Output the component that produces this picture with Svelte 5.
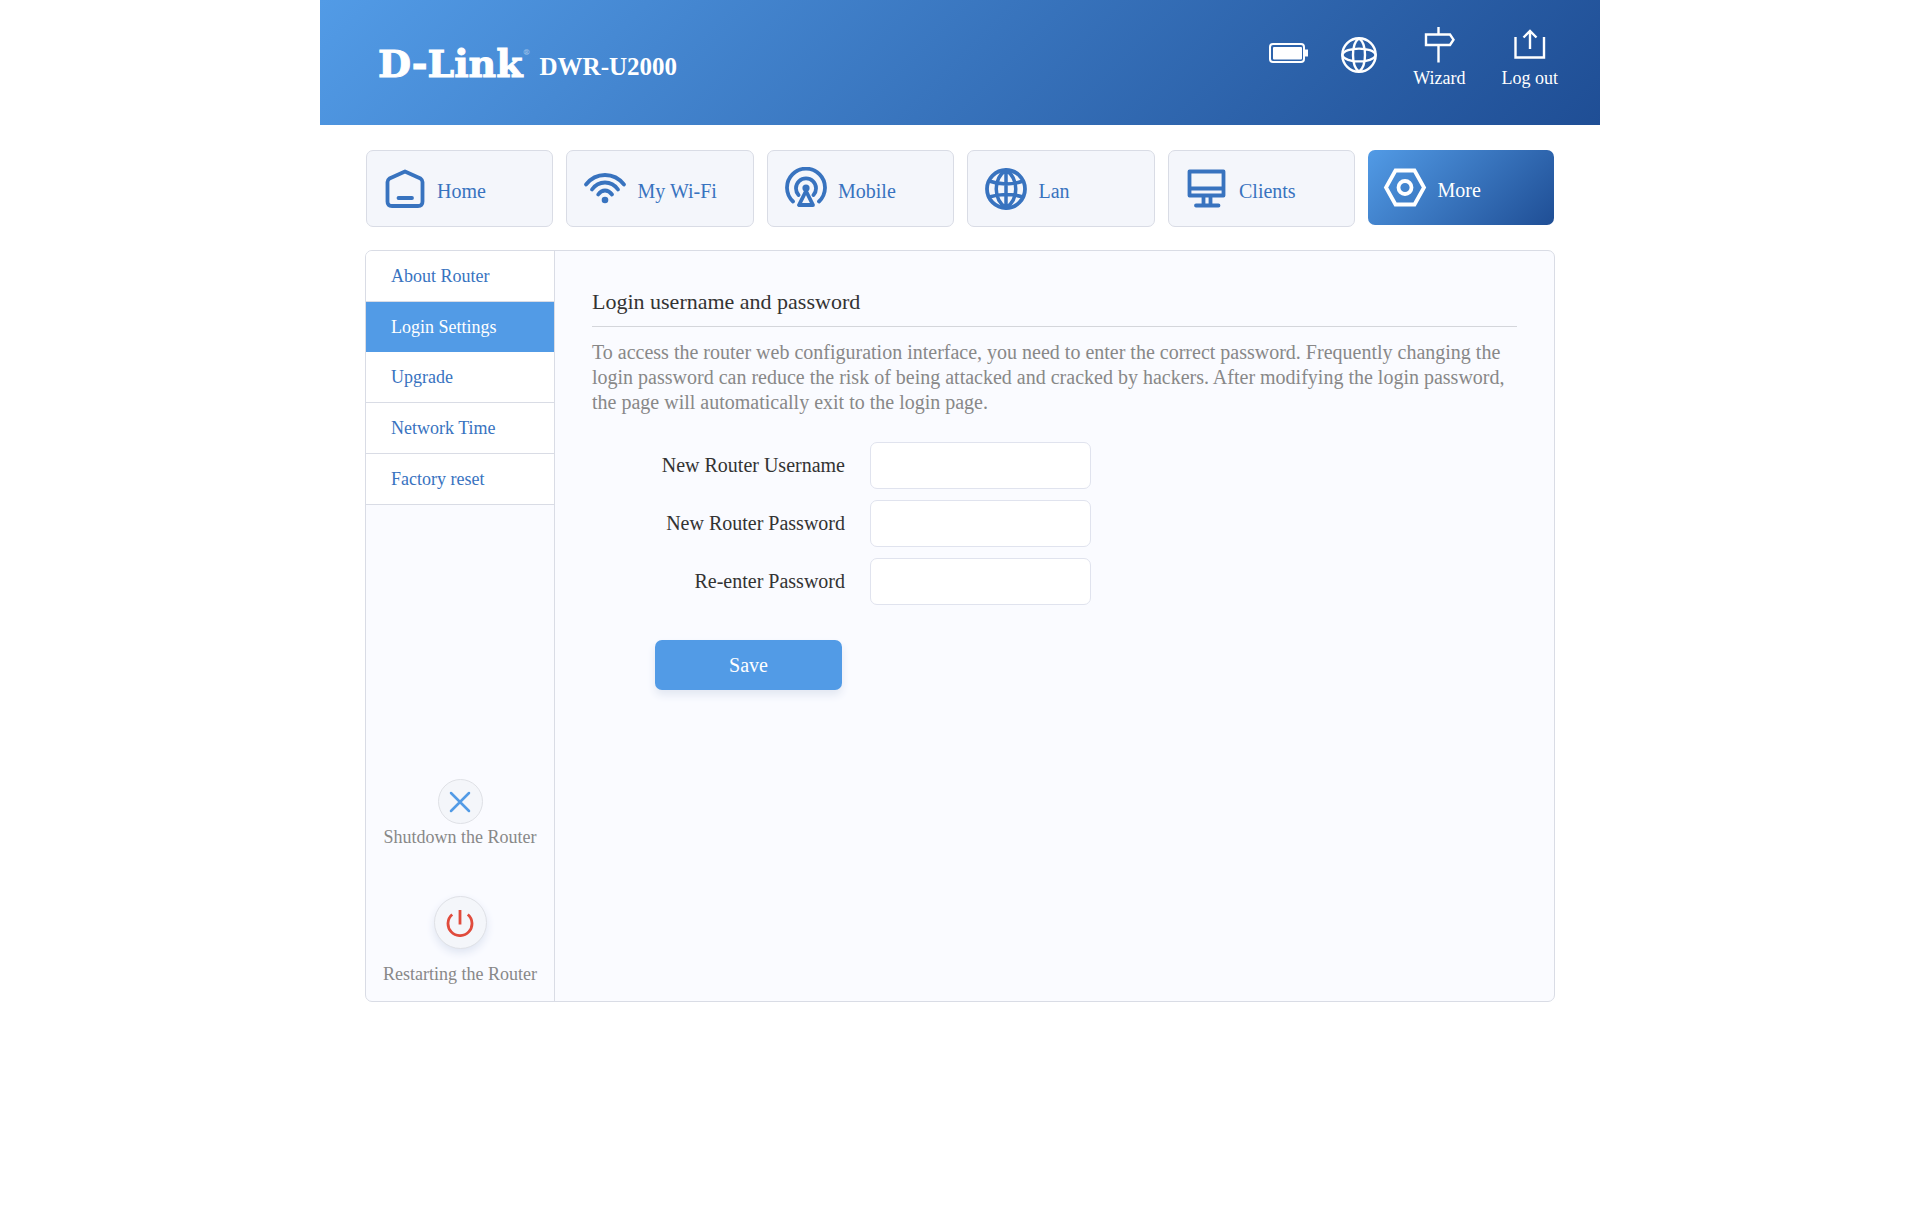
<script>
  const tabs = ['Home', 'My Wi-Fi', 'Mobile', 'Lan', 'Clients', 'More'];
  const menu = ['About Router', 'Login Settings', 'Upgrade', 'Network Time', 'Factory reset'];
  const fields = [
    { id: 'username', label: 'New Router Username', type: 'text' },
    { id: 'password', label: 'New Router Password', type: 'password' },
    { id: 'confirm', label: 'Re-enter Password', type: 'password' }
  ];
  let activeTab = $state('More');
  let activeItem = $state('Login Settings');
</script>

<div class="page">
  <header>
    <div class="brand">
      <span class="logo">D-Link<sup>®</sup></span>
      <h1>DWR-U2000</h1>
    </div>
    <div class="tools">
      <svg class="battery" width="40" height="20" viewBox="0 0 40 20" role="img" aria-label="Battery">
        <rect x="1" y="1" width="34" height="18" rx="3" fill="none" stroke="#fff" stroke-width="2" />
        <rect x="4" y="4" width="29" height="12.5" rx="1" fill="#fff" />
        <path d="M35 6.500h4v7H35z" fill="#fff" />
      </svg>
      <button class="tool globe" aria-label="Language">
        <svg width="36" height="36" viewBox="0 0 36 36" fill="none" stroke="#fff" stroke-width="2.400">
          <circle cx="18" cy="18" r="16.700" />
          <path d="M18 1.300C10 7 10 29 18 34.700M18 1.300c8 5.700 8 27.700 0 33.400M1.300 18C3.500 9.500 32.500 9.500 34.700 18M1.300 18C3.500 26.500 32.500 26.500 34.700 18" />
        </svg>
      </button>
      <button class="tool">
        <svg width="36" height="36" viewBox="0 0 36 36" fill="none" stroke="#fff" stroke-width="2.400">
          <path d="M17.500 0v7.500M17.500 18v17.500M5 7.500h24l3.500 5.200L29 18H5z" />
        </svg>
        <span>Wizard</span>
      </button>
      <button class="tool">
        <svg width="36" height="36" viewBox="0 0 36 36" fill="none" stroke="#fff" stroke-width="2.400">
          <path d="M3.500 10v20.500h28.500V10M18 22V4M11.500 10.500L18 4l6.500 6.500" />
        </svg>
        <span>Log out</span>
      </button>
    </div>
  </header>

  <nav class="tabs" aria-label="Main">
    {#each tabs as tab}
      <a href="#{tab}" class:active={tab === activeTab} onclick={() => (activeTab = tab)}>
        <svg width="44" height="44" viewBox="0 0 44 44" fill="none" stroke="currentColor" stroke-width="3.800" stroke-linecap="round" stroke-linejoin="round" aria-hidden="true">
          {#if tab === 'Home'}
            <path d="M22 4.500L6.500 11.500Q4.500 13 4.500 15V34.500Q4.500 39 9 39H35Q39.500 39 39.500 34.500V15Q39.500 13 37.500 11.500zM15.500 31H29" />
          {:else if tab === 'My Wi-Fi'}
            <path d="M3 17.500Q10.500 8 22 8T41 17.500M9 22.500Q14 15.500 22 15.500T35 22.500M15.200 27.500Q18 23.500 22 23.500T29 27.500" />
            <circle cx="22" cy="33" r="3.300" fill="currentColor" stroke="none" />
          {:else if tab === 'Mobile'}
            <path d="M9 34.500A19 19 0 1 1 35 34.500M14.500 28A10 10 0 1 1 29.500 28M22 24l-7 14h14z" />
            <circle cx="22" cy="21" r="3.600" fill="currentColor" stroke="none" />
          {:else if tab === 'Lan'}
            <circle cx="22" cy="22" r="19" />
            <path stroke-width="3.500" d="M22 3v38M22 3C9 12 9 32 22 41M22 3c13 9 13 29 0 38M5 14q17 6 34 0M5 30q17-5 34 0" />
          {:else if tab === 'Clients'}
            <path d="M4.500 4.500h34v24h-34zM4.500 21.500h34M18.500 29v9M25.500 29v9M11 38.500h22.500" />
          {:else}
            <path d="M12.500 4.500h19L41 21.500l-9.500 17h-19L3 21.500z" stroke-linejoin="miter" />
            <circle cx="22" cy="21.500" r="6.500" />
          {/if}
        </svg>
        <span>{tab}</span>
      </a>
    {/each}
  </nav>

  <div class="panel">
    <aside>
      <ul>
        {#each menu as item}
          <li>
            <a href="#{item}" class:active={item === activeItem} onclick={() => (activeItem = item)}>{item}</a>
          </li>
        {/each}
      </ul>
      <div class="power">
        <button class="action">
          <span class="round">
            <svg width="22" height="22" viewBox="0 0 22 22" fill="none" stroke="#529be6" stroke-width="2.500" stroke-linecap="round">
              <path d="M2 2l18 18M20 2L2 20" />
            </svg>
          </span>
          <span>Shutdown the Router</span>
        </button>
        <button class="action restart">
          <span class="round">
            <svg width="28" height="28" viewBox="0 0 28 28" fill="none" stroke="#e04b3c" stroke-width="2.800">
              <path d="M6.200 5.500A12 12 0 1 0 21.800 5.500M14 1v14.500" />
            </svg>
          </span>
          <span>Restarting the Router</span>
        </button>
      </div>
    </aside>

    <main>
      <h2>Login username and password</h2>
      <p>
        To access the router web configuration interface, you need to enter the correct password.
        Frequently changing the login password can reduce the risk of being attacked and cracked by
        hackers. After modifying the login password, the page will automatically exit to the login
        page.
      </p>
      <form onsubmit={(e) => e.preventDefault()}>
        {#each fields as field}
          <div class="field">
            <label for={field.id}>{field.label}</label>
            <input id={field.id} type={field.type} />
          </div>
        {/each}
        <button class="save">Save</button>
      </form>
    </main>
  </div>
</div>

<style>
  :global(body) {
    background: #fff;
    font-family: 'Liberation Serif', 'Times New Roman', serif;
  }
  .page,
  .page * {
    box-sizing: border-box;
  }
  .page {
    max-width: 1280px;
    margin: 0 auto;
  }
  button {
    padding: 0;
    border: 0;
    background: none;
    font-family: inherit;
    cursor: pointer;
  }
  a {
    text-decoration: none;
  }
  svg {
    display: block;
    flex: none;
  }
  header {
    display: flex;
    justify-content: space-between;
    height: 125px;
    padding: 0 42px 0 58px;
    background: linear-gradient(135deg, #529be6, #1f4e95);
    color: #fff;
  }
  .brand {
    display: flex;
    align-items: flex-start;
    gap: 9px;
    padding-top: 40px;
  }
  .logo {
    display: flex;
    font: bold 38px/48px 'DejaVu Serif', serif;
    -webkit-text-stroke: 1px #fff;
  }
  sup {
    font-size: 8px;
    line-height: 24px;
    opacity: 0.4;
    -webkit-text-stroke: 0;
  }
  h1 {
    margin: 0;
    padding-top: 12px;
    font-size: 25px;
    line-height: 30px;
  }
  .tools {
    display: flex;
    align-items: flex-start;
    padding-top: 27px;
  }
  .battery {
    margin: 16px 32px 0 0;
  }
  .tool {
    display: flex;
    flex-direction: column;
    align-items: center;
    gap: 5px;
    color: #fff;
    font-size: 18px;
    line-height: 20px;
  }
  .tool + .tool {
    margin-left: 36px;
  }
  .globe {
    padding-top: 10px;
  }
  .tabs {
    display: grid;
    grid-template-columns: repeat(5, 188fr) 186fr;
    align-items: start;
    gap: 13px;
    padding: 25px 46px 0;
  }
  .tabs a {
    display: flex;
    align-items: center;
    gap: 10px;
    height: 77px;
    padding: 0 16px;
    border: 1px solid #d9dce5;
    border-radius: 7px;
    background: #f4f6fb;
    color: #3873bf;
    font-size: 20px;
    line-height: 24px;
  }
  .tabs span {
    padding-top: 4px;
  }
  .tabs a.active {
    height: 75px;
    padding: 0 15px;
    border: 0;
    background: linear-gradient(135deg, #529be6, #1f4e95);
    color: #fff;
  }
  .panel {
    display: grid;
    grid-template-columns: 189px 1fr;
    min-height: 752px;
    margin: 23px 45px 0;
    border: 1px solid #d9dce5;
    border-radius: 7px;
    background: #fafbff;
    overflow: hidden;
  }
  aside {
    display: flex;
    flex-direction: column;
    justify-content: space-between;
    border-right: 1px solid #d9dce5;
  }
  ul {
    margin: 0;
    padding: 0;
    list-style: none;
  }
  li a {
    display: block;
    height: 51px;
    padding: 0 25px;
    border-bottom: 1px solid #d9dce5;
    background: #fff;
    color: #3873bf;
    font-size: 18px;
    line-height: 50px;
  }
  li a.active {
    height: 50px;
    border: 0;
    background: #529be6;
    color: #fff;
  }
  .power {
    display: flex;
    flex-direction: column;
    align-items: center;
    gap: 48px;
    padding-bottom: 16px;
  }
  .action {
    display: flex;
    flex-direction: column;
    align-items: center;
    gap: 2px;
    color: #888;
    font-size: 18px;
    line-height: 22px;
    white-space: nowrap;
  }
  .round {
    display: grid;
    place-items: center;
    width: 45px;
    height: 45px;
    border: 1px solid #dfe1e6;
    border-radius: 50%;
    background: #f4f6fa;
  }
  .restart {
    gap: 14px;
  }
  .restart .round {
    width: 53px;
    height: 53px;
    box-shadow: 0 4px 8px #dfe5f2;
  }
  main {
    padding: 37px;
  }
  h2 {
    margin: 0;
    padding-bottom: 10px;
    border-bottom: 1px solid #d4d6db;
    color: #333;
    font-size: 22px;
    font-weight: 400;
    line-height: 28px;
  }
  p {
    margin: 13px 0 0;
    color: #888;
    font-size: 20px;
    line-height: 25px;
  }
  form {
    display: flex;
    flex-direction: column;
    align-items: flex-start;
    gap: 11px;
    padding-top: 27px;
  }
  .field {
    display: flex;
    align-items: center;
    gap: 25px;
  }
  label {
    width: 253px;
    padding-bottom: 2px;
    color: #333;
    font-size: 20px;
    line-height: 24px;
    text-align: right;
  }
  input {
    width: 221px;
    height: 47px;
    padding: 0 12px;
    border: 1px solid #e0e3ee;
    border-radius: 7px;
    background: #fff;
    font: inherit;
    font-size: 20px;
  }
  .save {
    width: 187px;
    height: 50px;
    margin: 24px 0 0 63px;
    border-radius: 7px;
    background: #529be6;
    box-shadow: 0 5px 8px #e2e7f2;
    color: #fff;
    font-size: 20px;
    line-height: 50px;
  }
</style>
